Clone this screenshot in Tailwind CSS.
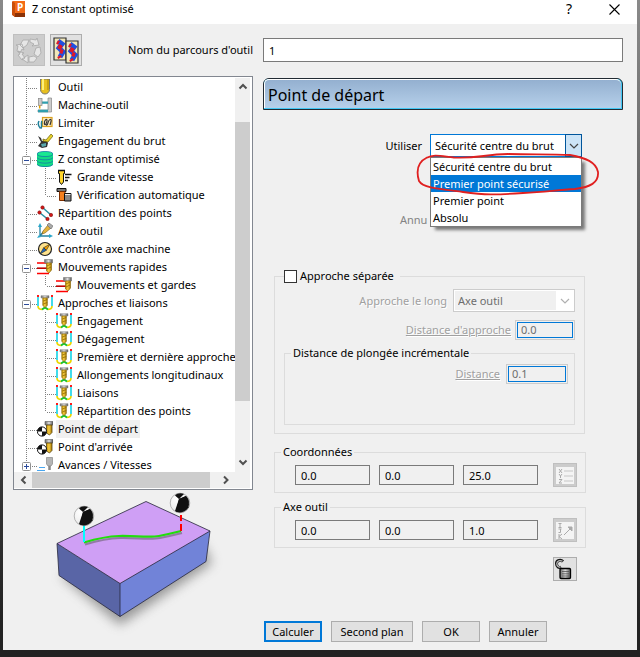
<!DOCTYPE html>
<html lang="fr">
<head>
  <meta charset="UTF-8" />
  <meta name="viewport" content="width=device-width, initial-scale=1" />
  <title>Z constant optimisé</title>
  <script src="https://cdn.jsdelivr.net/npm/@tailwindcss/browser@4"></script>
</head>
<body class="bg-[#222222] font-['Noto_Sans','Open_Sans',sans-serif] text-[11px] leading-4 text-black">
  <!-- Icon library -->
  <svg class="absolute h-0 w-0" aria-hidden="true">
    <defs>
      <linearGradient id="gold" x1="0" x2="1"><stop offset="0" stop-color="#c99700"/><stop offset=".45" stop-color="#f5cb45"/><stop offset="1" stop-color="#a87a00"/></linearGradient>
      <linearGradient id="steel" x1="0" x2="1"><stop offset="0" stop-color="#666"/><stop offset=".5" stop-color="#ddd"/><stop offset="1" stop-color="#555"/></linearGradient>
      <radialGradient id="ball" cx=".35" cy=".3" r=".8"><stop offset="0" stop-color="#fff"/><stop offset=".7" stop-color="#eee"/><stop offset="1" stop-color="#888"/></radialGradient>
    </defs>
    <symbol id="i-tool" viewBox="0 0 16 16"><path d="M3.500 0v10.500a4.500 4.500 0 0 0 9 0V0z" fill="#e8c020" stroke="#777" /><path d="M6 0v11" stroke="#fff07a" stroke-width="2"/><path d="M11 0v11" stroke="#a88300"/></symbol>
    <symbol id="i-machine" viewBox="0 0 16 16"><path d="M11 1h3.500v14H1v-2h10z" fill="#ccc" stroke="#888" stroke-width=".7"/><path d="M1 12.800h10v2.400H1zM5 4.500h6v2.200H5z" fill="#2f9fae"/><rect x="1.500" y="1.500" width="3.500" height="7" fill="#ccc" stroke="#888" stroke-width=".7"/><path d="M2.700 8.500v3" stroke="#e0a000" stroke-width="1.500"/></symbol>
    <symbol id="i-limit" viewBox="0 0 16 16"><rect x="5.500" y="2.500" width="9.500" height="9" fill="#ffeec0" stroke="#d9a020" stroke-width="1.200"/><path d="M8 10c-1.500-2 0-5 1-5.500s1.500 1 .5 3-.5 3 .5 2.500 1-5 3-5.500 1 2.500 0 5.500" fill="none" stroke="#333" stroke-width="1.200"/><path d="M2 6c-1.500 3 0 6 1.500 7.500M5 6c-1.500 2 .5 5-1 7.500" fill="none" stroke="#1d7f99" stroke-width="1.500"/></symbol>
    <symbol id="i-stock" viewBox="0 0 16 16"><path d="M1 3l3 2 1 3h5l1 2-1 4-5 1-4-2 3-4z" fill="#333"/><path d="M4 11l5-1v3l-4 1z" fill="#5aa7ad"/><path d="M6 6l3 1 5-6 2 2-5 6-5-1z" fill="#e6cf28" stroke="#69600e" stroke-width=".7"/></symbol>
    <symbol id="i-zconst" viewBox="0 0 16 16"><path d="M0 3v10c0 4 16 4 16 0V3z" fill="#12dc83"/><ellipse cx="8" cy="3" rx="8" ry="2.600" fill="#18e891"/><path d="M0 3c0 3.400 16 3.400 16 0M0 6.300c0 3.400 16 3.400 16 0M0 9.600c0 3.400 16 3.400 16 0M0 13c0 3.400 16 3.400 16 0M0 3c0-3.400 16-3.400 16 0" fill="none" stroke="#1679a8" stroke-width=".8"/></symbol>
    <symbol id="i-speed" viewBox="0 0 16 16"><path d="M2.500 1.500h6v3h-1V13L5.500 15.500 3.500 13V4.500h-1z" fill="#ffd52b" stroke="#111"/><path d="M2 1.500h7M9 5.500h6.500M9 8.500h4.500M9 11.500h3" stroke="#111" stroke-width="1.300"/></symbol>
    <symbol id="i-verify" viewBox="0 0 16 16"><path d="M1 1.500h9v3H1z" fill="#777" stroke="#111"/><path d="M3.500 4.500h5.500v9H3.500z" fill="#f3801f" stroke="#7d2e00"/><path d="M8.500 6.500h6.500v7.500H8.500z" fill="#888" stroke="#111"/><path d="M9 7.500h5.500" stroke="#eee"/></symbol>
    <symbol id="i-points" viewBox="0 0 16 16"><path d="M2.500 7.500l8 6.500M5.500 2.500l8.500 7.500" stroke="#2a91a5" stroke-width="1.600"/><g fill="#d01818" stroke="#700" stroke-width=".5"><circle cx="2.500" cy="7.500" r="1.700"/><circle cx="10.500" cy="14" r="1.700"/><circle cx="5.500" cy="2.500" r="1.700"/><circle cx="14" cy="10" r="1.700"/></g></symbol>
    <symbol id="i-axis" viewBox="0 0 16 16"><path d="M3 2v11h11M3 13l4-5" fill="none" stroke="#2583a3" stroke-width="1.300"/><path d="M3 0L1 4h4zM16 13l-4-2v4zM0 15l4-1-2-2z" fill="#2aa7cb"/><path d="M5 11l1-3 5-6 3 3-6 5z" fill="#e5b33d" stroke="#7b5d18" stroke-width=".6"/><path d="M10 2l2-2 4 3-2 3z" fill="#aaa" stroke="#666" stroke-width=".6"/></symbol>
    <symbol id="i-compass" viewBox="0 0 16 16"><circle cx="8" cy="8" r="6.500" fill="#ffe28a" stroke="#222" stroke-width="1.200"/><path d="M13 3L9.300 9.300 6.700 6.700z" fill="#f0a000" stroke="#222" stroke-width=".6"/><path d="M3 13l3.700-6.300 2.600 2.600z" fill="#2467b5" stroke="#222" stroke-width=".6"/></symbol>
    <symbol id="i-rapid" viewBox="0 0 16 16"><path d="M0 4h9M0 14.500h12" stroke="#f00" stroke-width="1.600"/><path d="M0 9.200h10" stroke="#c00000" stroke-width="1.600"/><path d="M7.500.5h8v3.500h-8z" fill="url(#steel)" stroke="#777" stroke-width=".6"/><path d="M9.500 4h5v7l-2.500 3-2.500-2z" fill="url(#gold)" stroke="#8d6a10" stroke-width=".7"/><path d="M10 7l4-2M10 10l4-2" stroke="#805f00" stroke-width=".7"/></symbol>
    <symbol id="i-leads" viewBox="0 0 16 16"><path d="M1 2v9M15 2v9" stroke="#20d5e8" stroke-width="1.700"/><path d="M1 0v2M15 0v2" stroke="#f00" stroke-width="1.800"/><path d="M1 11c0 3.500 3 3.500 4.500 3.500M15 11c0 3.500-3 3.500-4.500 3.500" fill="none" stroke="#ead700" stroke-width="1.700"/><path d="M5 14.500l3-2 3 2" fill="none" stroke="#16c22c" stroke-width="2"/><path d="M4 .7h8v2.300H4z" fill="url(#steel)" stroke="#888" stroke-width=".5"/><path d="M5.800 3h4.500v7.500L8 12.500l-2.200-2z" fill="url(#gold)" stroke="#8d6a10" stroke-width=".7"/><path d="M6.300 6l4-1.500M6.300 9l4-1.500" stroke="#805f00" stroke-width=".7"/></symbol>
    <symbol id="i-start" viewBox="0 0 16 16"><path d="M8 .5h8V4H8z" fill="url(#steel)" stroke="#555" stroke-width=".6"/><path d="M9.500 4h5.500v7.500L12.500 14l-3-2z" fill="url(#gold)" stroke="#554310" stroke-width=".8"/><circle cx="5" cy="10.500" r="4.600" fill="#fff" stroke="#111"/><path d="M5 10.500V6a4.500 4.500 0 0 0-4.500 4.500zM5 10.500V15a4.500 4.500 0 0 0 4.500-4.500z" fill="#111"/></symbol>
    <symbol id="i-feed" viewBox="0 0 16 16"><path d="M2 10.500h6M0 13.500h8" stroke="#49a6ef" stroke-width="1.200"/><path d="M9.500.5h6V7l-1.500 2h-3L9.500 7z" fill="#b5b5b5" stroke="#888" stroke-width=".7"/><path d="M12.500 9v4" stroke="#888" stroke-width="2.500"/></symbol>
  </svg>

  <div class="bg-linear-to-b from-[#8a8a8a] from-0% via-[#454545] via-60% to-[#222222] to-95% px-[3px] pb-[7px]">
    <main class="bg-[#f0f0f0]">
      <!-- Title bar -->
      <header class="flex h-6 items-center bg-white pr-[11px] pb-1.5 pl-2">
        <svg class="h-4 w-4" viewBox="0 0 16 16" aria-hidden="true">
          <path d="M2 0h12v16H4l-2-2z" fill="#f36b16"/><path d="M2 12h12v4H4l-2-2z" fill="#8b3207"/><path d="M1 0l3 2v14l-3-2z" fill="#c94e0b"/>
          <text x="9" y="10" text-anchor="middle" font-size="10" font-weight="700" fill="#fff">P</text>
        </svg>
        <h1 class="ml-[5px] flex-1">Z constant optimisé</h1>
        <button class="w-6 text-sm" aria-label="Aide">?</button>
        <button class="ml-[21px] flex w-6 justify-center" aria-label="Fermer">
          <svg class="h-[11px] w-[11px]" viewBox="0 0 11 11"><path d="M.5.5l10 10M10.500.5l-10 10" stroke="#000" stroke-width="1.100"/></svg>
        </button>
      </header>

      <!-- Toolpath name -->
      <div class="flex items-center gap-[10px] pt-[10px] pr-[14px] pl-[10px]">
        <div class="flex w-60 items-center">
          <button class="flex h-8 w-8 items-center justify-center border border-[#bfbfbf] bg-[#cccccc]" aria-label="Recycler" disabled>
            <svg class="h-7 w-7" viewBox="0 0 28 28" fill="#e6e6e6" stroke="#a8a8a8" stroke-width=".8">
              <path d="M5 9l3-5h6l-2 5-4 3zM15 3l6 1 1-2 2 7-7 1 2-2-4-2zM21 12l4-1 1 6-3 4-4-3zM22 22l-3 4h-5v-5l5-1zM13 19v8l-6-4zM7 24l-4-5 2-1-2-3 6 2-2 1 3 4zM2 15l1-5-2-1 6-1 2 6-2-1-2 4z"/>
            </svg>
          </button>
          <button class="ml-[5px] flex h-8 w-8 items-center justify-center border border-[#adadad] bg-[#e1e1e1]" aria-label="Copier">
            <svg class="h-7 w-7" viewBox="0 0 28 28">
              <g id="sheet"><path d="M2 2h12v22H2z" fill="#f0e6b8" stroke="#333" stroke-width="1.200"/><path d="M6 5l4 3-3 4 4 4-3 5" fill="none" stroke="#2050e0" stroke-width="5"/><path d="M5 6l2 1M9 9l-2 4M8 15l3 1M7 20l1 2" fill="none" stroke="#e0182a" stroke-width="4"/></g>
              <use href="#sheet" x="12" y="3"/>
            </svg>
          </button>
          <label for="toolpathName" class="ml-auto">Nom du parcours d'outil</label>
        </div>
        <input id="toolpathName" type="text" value="1" class="h-6 min-w-0 flex-1 border border-[#7a7a7a] bg-white px-[5px]">
      </div>

      <div class="flex gap-[10px] pt-[10px] pr-[14px] pb-2 pl-[10px]">
        <!-- Left column: page tree and preview -->
        <section class="w-60 shrink-0">
          <div class="border border-[#828790] bg-white pt-px pr-0.5 pb-px">
            <div class="flex h-[394px]">
              <ul id="tree" class="min-w-0 flex-1 overflow-hidden"></ul>
              <div class="flex w-[15px] flex-col items-center bg-[#f0f0f0]">
                <svg class="h-4 w-4" viewBox="0 0 16 16"><path d="M4.500 10.500L8 7l3.500 3.500" fill="none" stroke="#505050" stroke-width="2"/></svg>
                <div class="mt-7 h-[279px] w-full bg-[#cdcdcd]"></div>
                <svg class="mt-auto h-4 w-4" viewBox="0 0 16 16"><path d="M4.500 4.500L8 8l3.500-3.500" fill="none" stroke="#505050" stroke-width="2"/></svg>
              </div>
            </div>
            <div class="flex h-4 items-center bg-[#f0f0f0] pl-0.5">
              <svg class="h-4 w-4" viewBox="0 0 16 16"><path d="M9.500 4.500L6 8l3.500 3.500" fill="none" stroke="#505050" stroke-width="2"/></svg>
              <div class="h-full w-[178px] bg-[#cdcdcd]"></div>
              <svg class="ml-2 h-4 w-4" viewBox="0 0 16 16"><path d="M6 4.500L9.500 8 6 11.500" fill="none" stroke="#505050" stroke-width="2"/></svg>
            </div>
          </div>
          <svg class="ml-7 h-[150px] w-[190px]" viewBox="41 490 190 150" role="img" aria-label="Point de départ et d'arrivée">
            <defs><filter id="soft" x="-20%" y="-20%" width="140%" height="150%"><feGaussianBlur stdDeviation="6"/></filter></defs>
            <path d="M60 575l60 50 92-62-10-20z" fill="#666" opacity=".65" filter="url(#soft)"/>
            <path d="M57 543.500l63 40v33l-61-41z" fill="#5965a6"/>
            <path d="M120 583.500l90-53-4 31-86 55z" fill="#7183d8"/>
            <path d="M57 543.500l89-42 64 29.500-90 52.500z" fill="#cf9ff5"/>
            <path d="M57 543.500l89-42 64 29.500-4 30.500-86 55-61-41zM57 543.500l63 40 90-52.500M120 583.500v33" fill="none" stroke="#26263a" stroke-width=".8"/>
            <path d="M85 544.500c10-3 20-6 35-6.500s30 2 40 0 14-3 22-5" fill="none" stroke="#555" stroke-width="2" opacity=".5"/>
            <path d="M84 542.500c10-3 20-6 35-6.500s30 2 40 0 14-3 22-5" fill="none" stroke="#22dd0c" stroke-width="2.200"/>
            <path d="M84 524v18" stroke="#0ff" stroke-width="2"/>
            <path d="M181 515v6M181 524v7" stroke="#f00" stroke-width="2"/>
            <g id="datum"><circle cx="84" cy="516" r="9.800" fill="url(#ball)" stroke="#777" stroke-width=".5"/><path d="M83 512l-4-3.500c2-2.500 6-3 9-1.500zM83 512l-4 12c3 2 8 2 11-1l3-3zM83 512l9 7c1.500-3 1.500-7-2-10z" fill="#111"/><path d="M83 512l7-3 3 9-3 5-10 2z" fill="#111"/></g>
            <use href="#datum" x="96" y="-13"/>
          </svg>
        </section>

        <!-- Right column: start point settings -->
        <form class="min-w-0 flex-1 pt-0.5" onsubmit="return false">
          <div class="rounded-t-md border border-[#222b33] bg-[#42c8f5]">
            <h2 class="mr-px mb-px h-[29px] rounded-t-[5px] border-t border-l border-white bg-linear-to-b from-[#94b0d0] to-[#b6d0ea] pl-[3px] text-base leading-[30px]">Point de départ</h2>
          </div>

          <div class="mt-6 mr-[41px] flex items-center justify-end gap-2">
            <label for="use">Utiliser</label>
            <div class="relative w-[152px]">
              <select id="use" class="block h-[23px] w-full appearance-none border border-[#0078d7] bg-white px-1">
                <option>Sécurité centre du brut</option>
                <option>Premier point sécurisé</option>
                <option>Premier point</option>
                <option>Absolu</option>
              </select>
              <span class="pointer-events-none absolute top-0 right-0 flex h-full w-[17px] items-center justify-center border border-[#00559b] bg-[#cce4f7]">
                <svg class="h-2 w-3" viewBox="0 0 12 8"><path d="M2 2l4 4 4-4" fill="none" stroke="#444" stroke-width="1.200"/></svg>
              </span>
              <!-- Open list -->
              <ul class="absolute top-full left-0 z-10 w-full border border-[#7a7a7a] bg-white leading-[17px] shadow-[4px_4px_3px_-1px_rgba(0,0,0,0.5)]" role="listbox">
                <li class="h-[17px] px-0.5" role="option">Sécurité centre du brut</li>
                <li class="h-[17px] bg-[#0078d7] px-0.5 text-white" role="option" aria-selected="true">Premier point sécurisé</li>
                <li class="h-[17px] px-0.5" role="option">Premier point</li>
                <li class="h-[17px] px-0.5" role="option">Absolu</li>
              </ul>
              <svg class="pointer-events-none absolute top-4 -left-4 z-20 h-12 w-[188px]" viewBox="414 150 188 48">
                <path d="M426 158c8-4 14-2 28-.5 24 1 30-3 54-3.500 30 .5 45 0 62 1 16 3 26 7 28 17 1 11-8 15-23 17-20 1-28 3-52 4-28 2-38 2-60-1-24-3-40-4-44-11-3-10-1-19 8-23.500" fill="none" stroke="#e02020" stroke-width="1.800"/>
              </svg>
            </div>
          </div>
          <p class="mt-[53px] ml-[137px] h-5 leading-5 text-[#838383]">Annu</p>

          <fieldset class="mt-[37px] mr-[38px] ml-[11px] border border-[#dcdcdc] px-[9px] pb-2">
            <legend class="flex h-[18px] items-center bg-[#f0f0f0] pr-1.5">
              <input id="separate" type="checkbox" class="h-[13px] w-[13px] appearance-none border border-[#333333] bg-white">
              <label for="separate" class="ml-[3px]">Approche séparée</label>
            </legend>
            <div class="flex items-center justify-end gap-1.5 pt-1">
              <label for="along" class="text-[#a0a0a0] [text-shadow:1px_1px_0_white]">Approche le long</label>
              <div class="relative w-[122px]">
                <select id="along" class="block h-[23px] w-full appearance-none border border-[#cccccc] bg-[#f0f0f0] px-1 text-[#6d6d6d] opacity-100 shadow-[inset_0_0_0_1px_white]" disabled>
                  <option>Axe outil</option>
                </select>
                <span class="pointer-events-none absolute top-px right-px bottom-px flex w-[18px] items-center justify-center bg-white">
                  <svg class="h-2 w-3" viewBox="0 0 12 8"><path d="M2 2l4 4 4-4" fill="none" stroke="#b0b0b0" stroke-width="1.200"/></svg>
                </span>
              </div>
            </div>
            <div class="mt-2 flex items-center justify-end gap-1">
              <label for="approach" class="text-[#a0a0a0] underline [text-shadow:1px_1px_0_white]">Distance d'approche</label>
              <div class="border border-[#cccccc] p-px">
                <input id="approach" type="text" value="0.0" disabled class="block h-4 w-14 border border-[#0078d7] px-[3px] text-[#6d6d6d]">
              </div>
            </div>
            <fieldset class="mt-1 border border-[#dcdcdc] pr-1.5 pb-10 pl-1.5">
              <legend class="h-[18px] px-0.5 leading-[18px]">Distance de plongée incrémentale</legend>
              <div class="flex items-center justify-end gap-1.5 pt-0.5">
                <label for="distance" class="text-[#a0a0a0] underline [text-shadow:1px_1px_0_white]">Distance</label>
                <div class="border border-[#cccccc] p-px">
                  <input id="distance" type="text" value="0.1" disabled class="block h-4 w-[58px] border border-[#0078d7] px-[3px] text-[#6d6d6d]">
                </div>
              </div>
            </fieldset>
          </fieldset>

          <fieldset class="mt-[9px] mr-[37px] ml-[11px] border border-[#dcdcdc] pr-2 pb-[5px] pl-1.5">
            <legend class="h-[18px] px-0.5 leading-[18px]">Coordonnées</legend>
            <div class="flex items-center gap-[9px] pt-0.5 pl-[14px]">
              <input type="text" value="0.0" aria-label="X" readonly class="h-5 w-[75px] border border-[#7a7a7a] px-[5px]">
              <input type="text" value="0.0" aria-label="Y" readonly class="h-5 w-[75px] border border-[#7a7a7a] px-[5px]">
              <input type="text" value="25.0" aria-label="Z" readonly class="h-5 w-[75px] border border-[#7a7a7a] px-[5px]">
              <button class="ml-auto flex h-6 w-6 items-center justify-center border border-[#bfbfbf] bg-[#cccccc]" aria-label="Position" disabled>
                <svg class="h-5 w-5" viewBox="0 0 20 20"><path d="M1 2h18v17H1z" fill="#f4f4f4"/><path d="M9 6h9M9 11h9M9 16h9" stroke="#ddd" stroke-width="2"/><path d="M4 4l3 4M7 4L4 8M4 9l1.500 2L7 9M5.500 11v2M4 14.500h3l-3 3.500h3" fill="none" stroke="#aaa"/></svg>
              </button>
            </div>
          </fieldset>

          <fieldset class="mt-[5px] mr-[37px] ml-[11px] border border-[#dcdcdc] pr-2 pb-[5px] pl-1.5">
            <legend class="h-[18px] px-0.5 leading-[18px]">Axe outil</legend>
            <div class="flex items-center gap-[9px] pt-0.5 pl-[14px]">
              <input type="text" value="0.0" aria-label="I" readonly class="h-5 w-[75px] border border-[#7a7a7a] px-[5px]">
              <input type="text" value="0.0" aria-label="J" readonly class="h-5 w-[75px] border border-[#7a7a7a] px-[5px]">
              <input type="text" value="1.0" aria-label="K" readonly class="h-5 w-[75px] border border-[#7a7a7a] px-[5px]">
              <button class="ml-auto flex h-6 w-6 items-center justify-center border border-[#bfbfbf] bg-[#cccccc]" aria-label="Direction" disabled>
                <svg class="h-5 w-5" viewBox="0 0 20 20"><path d="M1 2h18v17H1z" fill="#f4f4f4"/><path d="M3.500 3.500h3M5 3.500v4M3.500 7.500h3M3.500 9h3M5.500 9v3.500H3.500M4 14v5M7 14l-3 2.500L7 19M9 15l6-6" fill="none" stroke="#aaa"/><path d="M13 7h4v4z" fill="#aaa" stroke="#aaa"/></svg>
              </button>
            </div>
          </fieldset>

          <div class="mt-[9px] mr-[46px] flex justify-end">
            <button class="flex h-6 w-6 items-center justify-center border border-[#adadad] bg-[#e1e1e1]" aria-label="Déverrouiller">
              <svg class="h-[22px] w-[22px]" viewBox="0 0 22 22"><path d="M9 3.500C7 1.500 2.500 2 2.500 5.500s2.500 4.500 4.500 3.500" fill="none" stroke="#111" stroke-width="3"/><path d="M8.500 3.200C6 2 2.800 2.500 2.800 5.500s2.200 4 3.700 3.300" fill="none" stroke="#bbb" stroke-width="1.300"/><rect x="6" y="10.500" width="10.500" height="10" rx="1" fill="url(#steel)" stroke="#000" stroke-width="1.300"/><path d="M8 13.500h7M8 15.800h7M8 18h7" stroke="#444" stroke-width=".7"/></svg>
            </button>
          </div>

          <div class="mt-10 ml-px flex gap-[9px]">
            <button type="submit" class="h-[21px] w-[58px] border-2 border-[#0078d7] bg-[#e1e1e1]">Calculer</button>
            <button type="button" class="h-[21px] w-[82px] border border-[#adadad] bg-[#e1e1e1]">Second plan</button>
            <button type="button" class="h-[21px] w-[58px] border border-[#adadad] bg-[#e1e1e1]">OK</button>
            <button type="button" class="h-[21px] w-[58px] border border-[#adadad] bg-[#e1e1e1]">Annuler</button>
          </div>
        </form>
      </div>
    </main>
  </div>

  <script>
    // box: expander state, last: last child of its branch
    const pages = [
      { label: "Outil", icon: "i-tool" },
      { label: "Machine-outil", icon: "i-machine" },
      { label: "Limiter", icon: "i-limit" },
      { label: "Engagement du brut", icon: "i-stock" },
      { label: "Z constant optimisé", icon: "i-zconst", box: "minus" },
      { label: "Grande vitesse", icon: "i-speed", child: true },
      { label: "Vérification automatique", icon: "i-verify", child: true, last: true },
      { label: "Répartition des points", icon: "i-points" },
      { label: "Axe outil", icon: "i-axis" },
      { label: "Contrôle axe machine", icon: "i-compass" },
      { label: "Mouvements rapides", icon: "i-rapid", box: "minus" },
      { label: "Mouvements et gardes", icon: "i-rapid", child: true, last: true },
      { label: "Approches et liaisons", icon: "i-leads", box: "minus" },
      { label: "Engagement", icon: "i-leads", child: true },
      { label: "Dégagement", icon: "i-leads", child: true },
      { label: "Première et dernière approche", icon: "i-leads", child: true },
      { label: "Allongements longitudinaux", icon: "i-leads", child: true },
      { label: "Liaisons", icon: "i-leads", child: true },
      { label: "Répartition des points", icon: "i-leads", child: true, last: true },
      { label: "Point de départ", icon: "i-start", selected: true },
      { label: "Point d'arrivée", icon: "i-start" },
      { label: "Avances / Vitesses", icon: "i-feed", box: "plus" }
    ];

    // Dotted connector lines and the expander box of one row
    function branch(page) {
      let lines = `M12.5 0v18`;
      lines += page.child ? `M31.5 0v${page.last ? 10 : 18}M33 10.5h9` : `M14 10.5h9`;
      const box = page.box ? `
        <rect x="8.5" y="6.5" width="8" height="8" rx="1" fill="#fff" stroke="#919191"/>
        <path d="M10 10.5h5${page.box === "plus" ? "M12.5 8v5" : ""}" stroke="#2b4a9b"/>` : "";
      return `<path d="${lines}" stroke="#808080" stroke-dasharray="1 1"/>${box}`;
    }

    document.getElementById("tree").innerHTML = pages.map(page => `
      <li class="flex h-[18px] items-center whitespace-nowrap">
        <svg class="${page.child ? "w-[42px]" : "w-[23px]"} h-[18px] shrink-0">${branch(page)}</svg>
        <svg class="h-4 w-4 shrink-0"><use href="#${page.icon}"/></svg>
        <span class="ml-[3px] px-0.5 leading-[18px] ${page.selected ? "bg-[#f0f0f0]" : ""}">${page.label}</span>
      </li>`).join("");
  </script>
</body>
</html>
